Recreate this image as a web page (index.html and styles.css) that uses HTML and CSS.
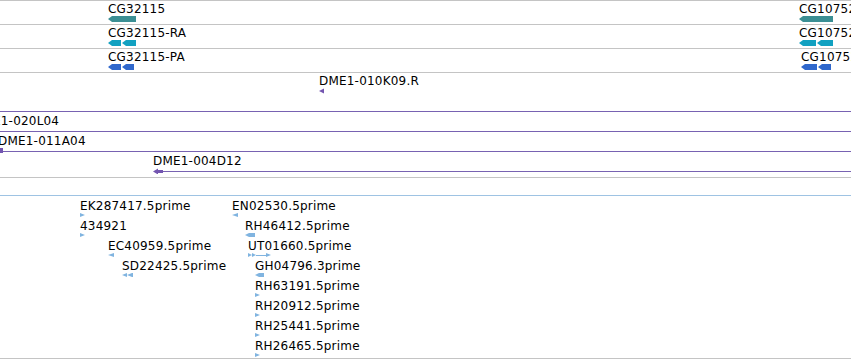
FILE: index.html
```html
<!DOCTYPE html>
<html lang="en">
<head>
    <meta charset="UTF-8">
    <title>Detailed view</title>
    <link rel="stylesheet" href="styles.css">
</head>
<body>

<div class="panel">

    <!-- Gene models -->
    <div class="track genes">
        <div class="row">
            <div class="feat" style="left:108px;top:1px">
                <div class="lbl">CG32115</div>
                <svg class="glyph" width="29" height="6"><polygon class="gene" points="0,3 4,0 28,0 28,6 4,6"/></svg>
            </div>
            <div class="feat" style="left:799px;top:1px">
                <div class="lbl">CG10752</div>
                <svg class="glyph" width="35" height="6"><polygon class="gene" points="0,3 4,0 34,0 34,6 4,6"/></svg>
            </div>
        </div>
        <div class="row">
            <div class="feat" style="left:108px;top:1px">
                <div class="lbl">CG32115-RA</div>
                <svg class="glyph" width="29" height="6">
                    <polygon class="rna" points="0,3 4,0 13,0 13,6 4,6"/>
                    <polygon class="rna" points="14,3 18,0 28,0 28,6 18,6"/>
                </svg>
            </div>
            <div class="feat" style="left:799px;top:1px">
                <div class="lbl">CG10752-RA</div>
                <svg class="glyph" width="35" height="6">
                    <polygon class="rna" points="0,3 4,0 17,0 17,6 4,6"/>
                    <polygon class="rna" points="18,3 22,0 34,0 34,6 22,6"/>
                </svg>
            </div>
        </div>
        <div class="row">
            <div class="feat" style="left:108px;top:1px">
                <div class="lbl">CG32115-PA</div>
                <svg class="glyph" width="27" height="6">
                    <polygon class="prot" points="0,3 4,0 13,0 13,6 4,6"/>
                    <polygon class="prot" points="14,3 18,0 26,0 26,6 18,6"/>
                </svg>
            </div>
            <div class="feat" style="left:801px;top:1px">
                <div class="lbl">CG10752-PA</div>
                <svg class="glyph" width="31" height="6">
                    <polygon class="prot" points="0,3 4,0 16,0 16,6 4,6"/>
                    <polygon class="prot" points="17,3 21,0 30,0 30,6 21,6"/>
                </svg>
            </div>
        </div>
    </div>

    <!-- BAC / cosmid clones -->
    <div class="track clones">
        <div class="feat" style="left:319px;top:1px">
            <div class="lbl">DME1-010K09.R</div>
            <svg class="glyph" width="6" height="6"><polygon class="clone" points="0,3 5,0.5 5,5.5"/></svg>
        </div>
        <div class="feat" style="left:0;top:21px">
            <div class="lbl">&nbsp;</div>
            <svg class="glyph" width="851" height="6"><line class="span" x1="0" y1="3.5" x2="851" y2="3.5"/></svg>
        </div>
        <div class="feat" style="left:-27px;top:41px">
            <div class="lbl">DME1-020L04</div>
            <svg class="glyph" width="880" height="6"><line class="span" x1="27" y1="3.5" x2="880" y2="3.5"/></svg>
        </div>
        <div class="feat" style="left:-2px;top:61px">
            <div class="lbl">DME1-011A04</div>
            <svg class="glyph" width="855" height="6">
                <line class="span" x1="2" y1="3.5" x2="855" y2="3.5"/>
                <rect class="clone" x="2" y="0" width="3" height="5"/>
            </svg>
        </div>
        <div class="feat" style="left:153px;top:81px">
            <div class="lbl">DME1-004D12</div>
            <svg class="glyph" width="700" height="6">
                <line class="span" x1="8" y1="3.5" x2="700" y2="3.5"/>
                <polygon class="clone" points="0,3.5 5,0.5 5,2 10,2 10,5 5,5 5,6.5"/>
            </svg>
        </div>
    </div>

    <div class="track gap"></div>

    <!-- ESTs -->
    <div class="track ests">
        <div class="feat" style="left:80px;top:3px">
            <div class="lbl">EK287417.5prime</div>
            <svg class="glyph" width="6" height="5"><polygon class="est" points="0,0 5,2 0,4"/></svg>
        </div>
        <div class="feat" style="left:232px;top:3px">
            <div class="lbl">EN02530.5prime</div>
            <svg class="glyph" width="7" height="5"><polygon class="est" points="0,2 6,0 6,4"/></svg>
        </div>
        <div class="feat" style="left:80px;top:23px">
            <div class="lbl">434921</div>
            <svg class="glyph" width="6" height="5"><polygon class="est" points="0,0 5,2 0,4"/></svg>
        </div>
        <div class="feat" style="left:245px;top:23px">
            <div class="lbl">RH46412.5prime</div>
            <svg class="glyph" width="11" height="5"><polygon class="est" points="0,2 4,0 10,0 10,4 4,4"/></svg>
        </div>
        <div class="feat" style="left:108px;top:43px">
            <div class="lbl">EC40959.5prime</div>
            <svg class="glyph" width="7" height="5"><polygon class="est" points="0,2 6,0 6,4"/></svg>
        </div>
        <div class="feat" style="left:248px;top:43px">
            <div class="lbl">UT01660.5prime</div>
            <svg class="glyph" width="24" height="5">
                <polygon class="est" points="0,0 4,2 0,4"/>
                <polygon class="est" points="4,0 8,2 4,4"/>
                <line class="est-line" x1="8" y1="2.5" x2="19" y2="2.5"/>
                <polygon class="est" points="18,0 23,2 18,4"/>
            </svg>
        </div>
        <div class="feat" style="left:122px;top:63px">
            <div class="lbl">SD22425.5prime</div>
            <svg class="glyph" width="12" height="5">
                <polygon class="est" points="0,2 5,0 5,4"/>
                <polygon class="est" points="5,2 10,0 11,0 11,4 10,4"/>
            </svg>
        </div>
        <div class="feat" style="left:255px;top:63px">
            <div class="lbl">GH04796.3prime</div>
            <svg class="glyph" width="10" height="5"><polygon class="est" points="0,2 4,0 9,0 9,4 4,4"/></svg>
        </div>
        <div class="feat" style="left:255px;top:83px">
            <div class="lbl">RH63191.5prime</div>
            <svg class="glyph" width="6" height="5"><polygon class="est" points="0,0 5,2 0,4"/></svg>
        </div>
        <div class="feat" style="left:255px;top:103px">
            <div class="lbl">RH20912.5prime</div>
            <svg class="glyph" width="6" height="5"><polygon class="est" points="0,0 5,2 0,4"/></svg>
        </div>
        <div class="feat" style="left:255px;top:123px">
            <div class="lbl">RH25441.5prime</div>
            <svg class="glyph" width="6" height="5"><polygon class="est" points="0,0 5,2 0,4"/></svg>
        </div>
        <div class="feat" style="left:255px;top:143px">
            <div class="lbl">RH26465.5prime</div>
            <svg class="glyph" width="6" height="5"><polygon class="est" points="0,0 5,2 0,4"/></svg>
        </div>
    </div>

</div>

</body>
</html>
```

FILE: styles.css
```css
body, html {
    margin: 0;
    padding: 0;
    background: white;
    font-family: "DejaVu Sans", sans-serif;
    font-size: 12px;
    color: #000;
}

/* Whole detail panel */
.panel {
    width: 851px;
    height: 360px;
    overflow: hidden;
}

.track {
    position: relative;
    overflow: hidden;
}

/* Gene rows, each with a grey rule below */
.genes {
    border-top: 1px solid #c4c4c4;
}

.row {
    position: relative;
    height: 23px;
    border-bottom: 1px solid #c4c4c4;
    overflow: hidden;
}

.clones {
    height: 104px;
    border-bottom: 1px solid #c4c4c4;
}

.gap {
    height: 17px;
    border-bottom: 1px solid #9ec3e3;
}

.ests {
    height: 162px;
    border-bottom: 1px solid #c4c4c4;
}

/* A feature: label on top, glyph below */
.feat {
    position: absolute;
    white-space: nowrap;
}

.lbl {
    height: 14px;
    line-height: 14px;
    letter-spacing: 0.2px;
}

.glyph {
    display: block;
}

/* Glyph colours */
.gene  { fill: #3b8f94; }
.rna   { fill: #12a1c1; }
.prot  { fill: #3068cc; }
.clone { fill: #7355b0; }
.span  { stroke: #7862b2; stroke-width: 1; }
.est   { fill: #80b4e0; }
.est-line { stroke: #80b4e0; stroke-width: 1; }
```
